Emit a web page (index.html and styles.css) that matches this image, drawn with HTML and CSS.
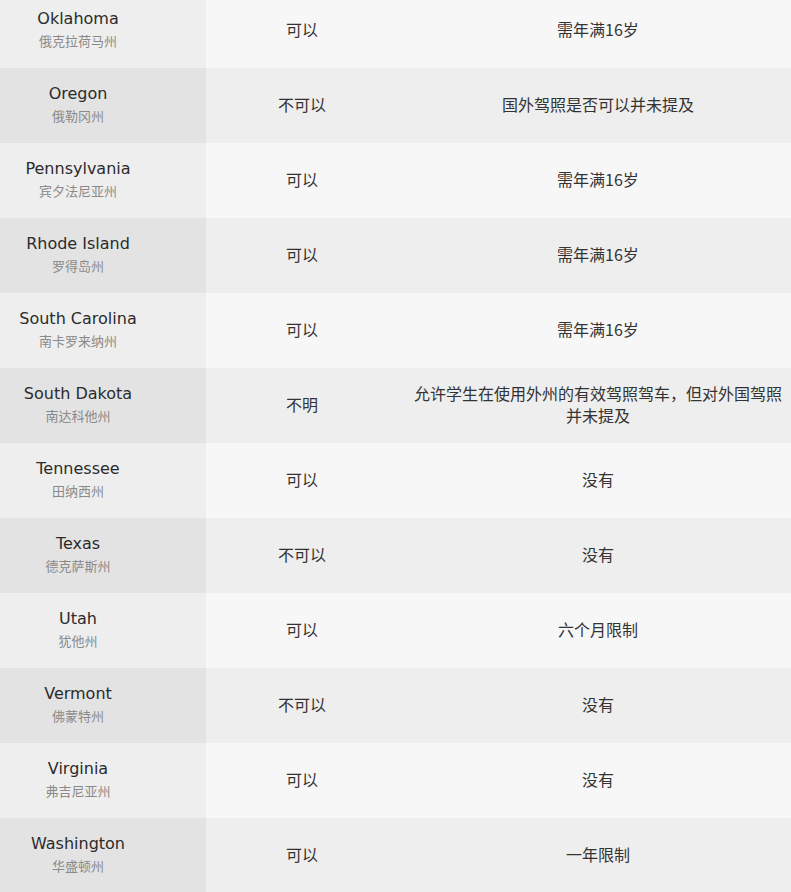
FILE: index.html
```html
<!DOCTYPE html>
<html lang="zh">
<head>
<meta charset="utf-8">
<link rel="stylesheet" href="styles.css">
</head>
<body>
<table class="tbl">
<tbody>
<tr><td class="state"><div class="en">Oklahoma</div><div class="zh">俄克拉荷马州</div></td><td class="c2">可以</td><td class="c3">需年满16岁</td></tr>
<tr><td class="state"><div class="en">Oregon</div><div class="zh">俄勒冈州</div></td><td class="c2">不可以</td><td class="c3">国外驾照是否可以并未提及</td></tr>
<tr><td class="state"><div class="en">Pennsylvania</div><div class="zh">宾夕法尼亚州</div></td><td class="c2">可以</td><td class="c3">需年满16岁</td></tr>
<tr><td class="state"><div class="en">Rhode Island</div><div class="zh">罗得岛州</div></td><td class="c2">可以</td><td class="c3">需年满16岁</td></tr>
<tr><td class="state"><div class="en">South Carolina</div><div class="zh">南卡罗来纳州</div></td><td class="c2">可以</td><td class="c3">需年满16岁</td></tr>
<tr><td class="state"><div class="en">South Dakota</div><div class="zh">南达科他州</div></td><td class="c2">不明</td><td class="c3">允许学生在使用外州的有效驾照驾车，但对外国驾照并未提及</td></tr>
<tr><td class="state"><div class="en">Tennessee</div><div class="zh">田纳西州</div></td><td class="c2">可以</td><td class="c3">没有</td></tr>
<tr><td class="state"><div class="en">Texas</div><div class="zh">德克萨斯州</div></td><td class="c2">不可以</td><td class="c3">没有</td></tr>
<tr><td class="state"><div class="en">Utah</div><div class="zh">犹他州</div></td><td class="c2">可以</td><td class="c3">六个月限制</td></tr>
<tr><td class="state"><div class="en">Vermont</div><div class="zh">佛蒙特州</div></td><td class="c2">不可以</td><td class="c3">没有</td></tr>
<tr><td class="state"><div class="en">Virginia</div><div class="zh">弗吉尼亚州</div></td><td class="c2">可以</td><td class="c3">没有</td></tr>
<tr><td class="state"><div class="en">Washington</div><div class="zh">华盛顿州</div></td><td class="c2">可以</td><td class="c3">一年限制</td></tr>
</tbody>
</table>
</body>
</html>
```
FILE: styles.css
```css
html, body {
  margin: 0;
  padding: 0;
  background: #f7f7f7;
}
.tbl {
  margin-top: -7px;
  width: 791px;
  border-collapse: collapse;
  table-layout: fixed;
  font-family: "Noto Sans CJK SC", sans-serif;
  color: #333;
}
.tbl td {
  height: 75px;
  padding: 0 8px 3px 8px;
  box-sizing: border-box;
  text-align: center;
  vertical-align: middle;
  font-size: 16px;
  line-height: 22px;
}
.tbl td.state { width: 206px; padding: 0 50px 1px 0; background: #eeeeee; }
.tbl td.c2 { width: 192px; background: #f7f7f7; }
.tbl td.c3 { padding-left: 15px; background: #f7f7f7; }
.tbl tr:nth-child(even) td.state { background: #e3e3e3; }
.tbl tr:nth-child(even) td.c2,
.tbl tr:nth-child(even) td.c3 { background: #eeeeee; }
.en {
  font-family: "DejaVu Sans", sans-serif;
  font-size: 16px;
  line-height: 22px;
  color: #2b2b2b;
}
.zh {
  font-family: "Noto Sans CJK SC", sans-serif;
  font-size: 13px;
  line-height: 22px;
  color: #8a8a8a;
}
```
